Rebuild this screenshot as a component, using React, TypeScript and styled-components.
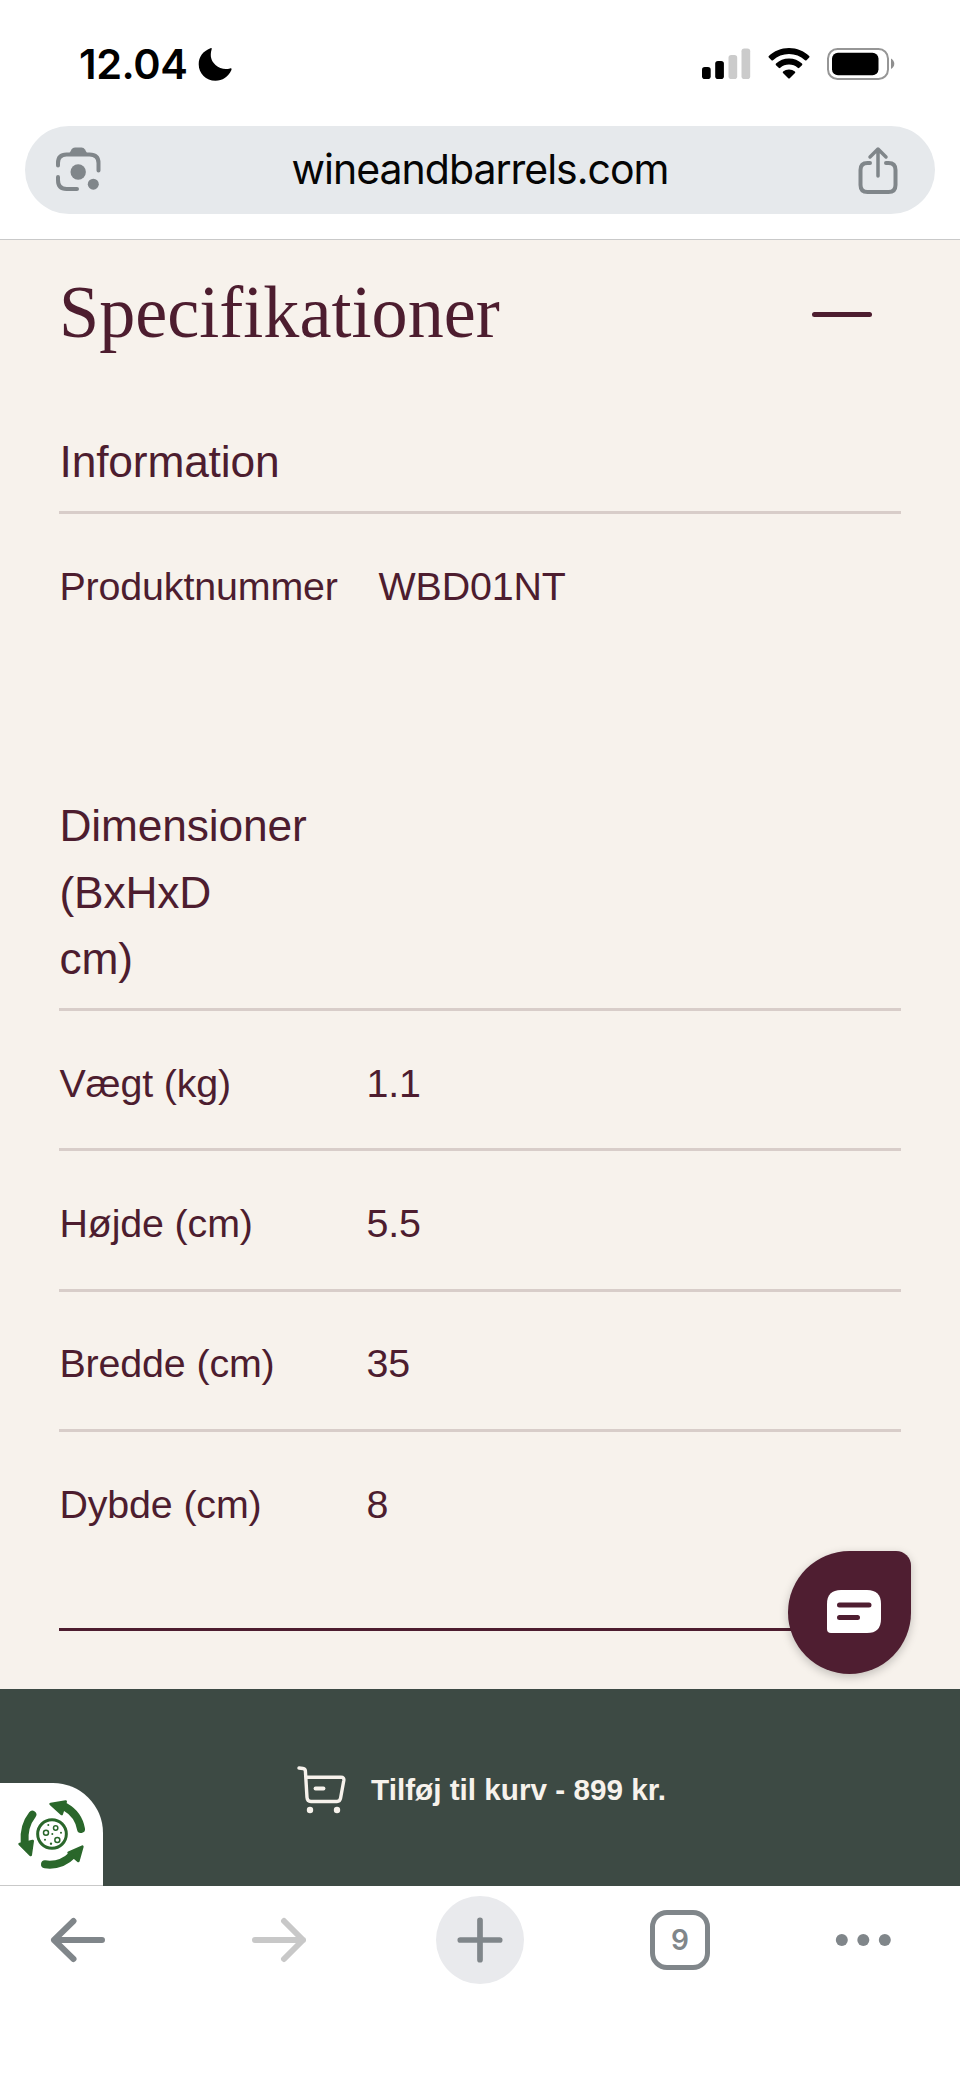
import React from "react";
import styled, { createGlobalStyle } from "styled-components";

const wine = "#4d1d2f";
const cream = "#f7f2ec";
const grey = "#80868a";

const GlobalStyle = createGlobalStyle`
  * { box-sizing: border-box; }
  body { margin: 0; background: #fff; }
`;

const Screen = styled.div`
  width: 960px;
  height: 2078px;
  display: flex;
  flex-direction: column;
  background: #fff;
  overflow: hidden;
  font-family: "Liberation Sans", Arial, sans-serif;
`;

const BrowserTop = styled.header`
  height: 240px;
  flex: none;
  display: flex;
  flex-direction: column;
  border-bottom: 1px solid #c9c9c9;
  font-family: Inter, "Liberation Sans", sans-serif;
`;

const StatusBar = styled.div`
  height: 126px;
  padding: 47px 65px 44px 79px;
  display: flex;
  align-items: flex-start;
  justify-content: space-between;
`;

const StatusGroup = styled.div<{ $gap: number }>`
  display: flex;
  align-items: center;
  gap: ${(p) => p.$gap}px;
  height: 34px;
`;

const Clock = styled.span`
  font-size: 41.5px;
  font-weight: 600;
  line-height: 34px;
  letter-spacing: -0.4px;
  width: 110px;
  white-space: nowrap;
  color: #000;
`;

const AddressBar = styled.div`
  height: 88px;
  margin: 0 25px;
  padding: 0 37px 0 29px;
  border-radius: 44px;
  background: #e6e9ec;
  display: flex;
  align-items: center;
  justify-content: space-between;
`;

const Address = styled.span`
  font-size: 41px;
  line-height: 48px;
  letter-spacing: -1px;
  color: #050505;
  padding-bottom: 3px;
`;

const Product = styled.main`
  height: 1449px;
  flex: none;
  padding: 24px 59px 0;
  background: ${cream};
  color: ${wine};
`;

const Accordion = styled.section`
  height: 1367px;
  border-bottom: 3px solid ${wine};
`;

const AccordionHeader = styled.div`
  height: 96px;
  display: flex;
  align-items: center;
  justify-content: space-between;
  padding-right: 29px;
`;

const Title = styled.h2`
  margin: 0;
  font-family: "Liberation Serif", "Times New Roman", serif;
  font-weight: 400;
  font-size: 75px;
  line-height: 96px;
  transform: scaleX(0.962);
  transform-origin: left;
`;

const Minus = styled.span`
  width: 60px;
  height: 5px;
  border-radius: 3px;
  background: ${wine};
  margin-top: 5px;
`;

const SpecGroup = styled.div<{ $top: number }>`
  margin-top: ${(p) => p.$top}px;
`;

const GroupHeading = styled.h3`
  margin: 0;
  padding: 0 640px 15.5px 0.5px;
  font-size: 44.3px;
  font-weight: 400;
  line-height: 66.5px;
  letter-spacing: -0.15px;
  border-bottom: 3px solid #d8cdc9;
`;

const SpecRow = styled.div<{ $label?: string; $last?: boolean }>`
  display: grid;
  grid-template-columns: ${(p) => p.$label ?? "307px"} 1fr;
  height: 140.4px;
  padding: 42.6px 0 0 0.5px;
  font-size: 39.4px;
  line-height: 59px;
  letter-spacing: -0.15px;
  white-space: nowrap;
  border-bottom: ${(p) => (p.$last ? "none" : "3px solid #d8cdc9")};
`;

const CartBar = styled.button`
  position: relative;
  height: 197px;
  flex: none;
  border: 0;
  padding: 4px 0 0 3px;
  background: #3d4a44;
  color: ${cream};
  display: flex;
  align-items: center;
  justify-content: center;
  gap: 24px;
  font: 700 29.7px/40px "Liberation Sans", Arial, sans-serif;
`;

const ConsentTab = styled.span`
  position: absolute;
  left: 0;
  bottom: 0;
  width: 103px;
  height: 103px;
  border-radius: 0 50px 0 0;
  background: #fff;
  border-bottom: 1px solid #c9c9c9;
  overflow: hidden;
`;

const ChatButton = styled.button`
  position: absolute;
  left: 788px;
  top: 1551px;
  width: 123px;
  height: 123px;
  border: 0;
  padding: 0 0 2px 8px;
  border-radius: 62px 15px 62px 62px;
  background: #4f1e31;
  box-shadow: 0 3px 10px rgba(0, 0, 0, 0.22);
  display: flex;
  align-items: center;
  justify-content: center;
`;

const Toolbar = styled.nav`
  height: 108px;
  flex: none;
  padding: 0 69px 0 50px;
  display: grid;
  grid-template-columns: 201px 179px 214px 191px auto;
  align-items: center;
`;

const NewTab = styled.span`
  width: 88px;
  height: 88px;
  margin-left: 6px;
  border-radius: 50%;
  background: #e9eaed;
  display: flex;
  align-items: center;
  justify-content: center;
`;

const TabCount = styled.span`
  width: 60px;
  height: 60px;
  margin-left: 6px;
  border: 5px solid ${grey};
  border-radius: 17px;
  display: flex;
  align-items: center;
  justify-content: center;
  font: 600 28px/34px Inter, sans-serif;
  color: ${grey};
`;

const MoonIcon = () => (
  <svg width="34" height="34" viewBox="0 0 34 34">
    <path d="M12.5 1.2C13.6.8 14 1.5 13.6 2.6C11.8 9 13 14 17.5 18C21.5 21.6 27 22.7 32 21.4C33.6 21 34 21.8 33.3 23.2C30 30 24.500 33.700 17.500 33.700C8 33.700.7 26.500.7 17.200C.7 9.800 5 4 12.500 1.200Z" />
  </svg>
);

const SignalIcon = () => (
  <svg width="49" height="32" viewBox="0 0 49 32">
    <rect x="0" y="19" width="8.700" height="12" rx="2.800" />
    <rect x="13.200" y="13" width="8.700" height="18" rx="2.800" />
    <rect x="26.500" y="7" width="8.700" height="24" rx="2.800" fill="#cbcbcb" />
    <rect x="39.500" y="0.500" width="8.700" height="30.500" rx="2.800" fill="#cbcbcb" />
  </svg>
);

const WifiIcon = () => (
  <svg width="42" height="32" viewBox="0 0 42 32">
    <path d="M21 0C29 0 36 3 41.200 8Q41.900 8.800 41.200 9.500L38.500 12.200Q37.800 12.900 37 12.200C32.500 8.200 27 6 21 6S9.500 8.200 5 12.200Q4.200 12.900 3.500 12.200L.8 9.500Q.1 8.800.8 8C6 3 13 0 21 0Z" />
    <path d="M21 10.600C26 10.600 30.600 12.500 34 15.600Q34.800 16.400 34 17.200L31.300 19.800Q30.500 20.500 29.700 19.800C27.300 17.800 24.300 16.600 21 16.600S14.700 17.800 12.300 19.800Q11.500 20.500 10.700 19.800L8 17.200Q7.200 16.400 8 15.600C11.400 12.500 16 10.600 21 10.600Z" />
    <path d="M21 21.500C23.300 21.500 25.200 22.200 26.900 23.500Q27.700 24.200 27 25L22 30Q21 31 20 30L15 25Q14.300 24.200 15.100 23.500C16.800 22.200 18.700 21.500 21 21.500Z" />
  </svg>
);

const BatteryIcon = () => (
  <svg width="68" height="32" viewBox="0 0 68 32">
    <rect x="1" y="1" width="60" height="30" rx="9.500" fill="none" stroke="#969696" strokeWidth="2" />
    <rect x="5" y="4.800" width="46.500" height="22.500" rx="6" />
    <path d="M64 10.500C66 11.500 67.300 13.500 67.300 15.800S66 20 64 21Z" fill="#8f8f8f" />
  </svg>
);

const LensIcon = () => (
  <svg width="48" height="48" viewBox="0 0 48 48" fill="none" stroke={grey} strokeWidth="4" strokeLinecap="round">
    <path d="M4 19.500V17Q4 8.500 12.500 8.500H35.500Q44.500 8.500 44.500 17V24.500" />
    <path d="M4 31V34Q4 43 12.500 43H23" />
    <path d="M14.500 9L17.500 3.500Q18.600 1.500 21 1.500H27.500Q29.900 1.500 31 3.500L34 9Z" fill={grey} stroke="none" />
    <circle cx="24.200" cy="26" r="7.700" fill={grey} stroke="none" />
    <circle cx="39.300" cy="38.200" r="5.500" fill={grey} stroke="none" />
  </svg>
);

const ShareIcon = () => (
  <svg width="40" height="48" viewBox="0 0 40 48" fill="none" stroke={grey} strokeWidth="4" strokeLinecap="round" strokeLinejoin="round">
    <path d="M12 17H9.500Q2.500 17 2.500 24V39Q2.500 46 9.500 46H30.500Q37.500 46 37.500 39V24Q37.500 17 30.500 17H28" />
    <path d="M20 30V3.500M12 11L20 3L28 11" strokeWidth="3.500" />
  </svg>
);

const ChatIcon = () => (
  <svg width="54" height="43" viewBox="0 0 54 43">
    <path d="M14 0H40Q54 0 54 14V29Q54 43 40 43H4Q0 43 0 39V14Q0 0 14 0Z" fill="#fff" />
    <path d="M12.500 15H42M12.500 27.500H30.500" stroke="#4f1e31" strokeWidth="5" strokeLinecap="round" />
  </svg>
);

const CartIcon = () => (
  <svg width="50" height="48" viewBox="0 0 50 48" fill="none" stroke={cream} strokeWidth="3.400" strokeLinecap="round" strokeLinejoin="round">
    <path d="M2 2L6 2.500Q8.200 2.800 8.400 5L10 31.500Q10.300 35.500 14 35.500H40Q43 35.500 43.600 32L46.800 14.500Q47.300 11.200 44 11.200H9" />
    <path d="M18.500 22.500H26.500" strokeWidth="3.800" />
    <circle cx="13" cy="44" r="3.200" fill={cream} stroke="none" />
    <circle cx="40" cy="44" r="3.200" fill={cream} stroke="none" />
  </svg>
);

const CookieIcon = () => (
  <svg width="104" height="103" viewBox="0 38 312 309" fill="none" stroke="#2a672b" strokeLinecap="round" strokeLinejoin="round">
    <circle cx="156" cy="191" r="43" strokeWidth="9" />
    <g strokeWidth="24">
      <path d="M97 133Q70 167 74 216" />
      <path d="M135 282Q184 288 217 254" />
      <path d="M243 176Q235 132 196 110" />
    </g>
    <g fill="#2a672b" strokeWidth="8">
      <path d="M59 221L98 212L92 254Z" />
      <path d="M206 247L247 229L235 272Z" />
      <path d="M152 101L197 94L185 131Z" />
    </g>
    <g strokeWidth="4.500">
      <circle cx="138" cy="187" r="7.500" />
      <circle cx="167" cy="173" r="6.500" />
      <circle cx="172" cy="209" r="7.500" />
    </g>
    <g fill="#2a672b" stroke="none">
      <circle cx="145" cy="164" r="3" />
      <circle cx="183" cy="187" r="3" />
      <circle cx="157" cy="191" r="3" />
      <circle cx="135" cy="208" r="3" />
      <circle cx="153" cy="220" r="3.500" />
    </g>
  </svg>
);

const ArrowIcon = ({ forward = false }: { forward?: boolean }) => (
  <svg width="55" height="46" viewBox="0 0 55 46" fill="none" stroke={forward ? "#c8c8c8" : grey} strokeWidth="6" strokeLinecap="round" strokeLinejoin="round">
    <path d={forward ? "M4 23H52M33 4L52 23L33 42" : "M52 23H4M23.500 4L4 23L23.500 42"} />
  </svg>
);

const PlusIcon = () => (
  <svg width="46" height="46" viewBox="0 0 46 46" stroke={grey} strokeWidth="5.700" strokeLinecap="round">
    <path d="M3.300 23H42.700M23 3.300V42.700" />
  </svg>
);

const DotsIcon = () => (
  <svg width="56" height="14" viewBox="0 0 56 14" fill={grey}>
    <circle cx="6.800" cy="7" r="6" />
    <circle cx="28.300" cy="7" r="6" />
    <circle cx="49.800" cy="7" r="6" />
  </svg>
);

const dimensions = [
  ["Vægt (kg)", "1.1"],
  ["Højde (cm)", "5.5"],
  ["Bredde (cm)", "35"],
  ["Dybde (cm)", "8"],
];

export default function App() {
  return (
    <Screen>
      <GlobalStyle />
      <BrowserTop>
        <StatusBar>
          <StatusGroup $gap={9}>
            <Clock>12.04</Clock>
            <MoonIcon />
          </StatusGroup>
          <StatusGroup $gap={17}>
            <SignalIcon />
            <WifiIcon />
            <BatteryIcon />
          </StatusGroup>
        </StatusBar>
        <AddressBar>
          <LensIcon />
          <Address>wineandbarrels.com</Address>
          <ShareIcon />
        </AddressBar>
      </BrowserTop>

      <Product>
        <Accordion>
          <AccordionHeader>
            <Title>Specifikationer</Title>
            <Minus />
          </AccordionHeader>
          <SpecGroup $top={69}>
            <GroupHeading>Information</GroupHeading>
            <SpecRow $label="319px" $last>
              <span>Produktnummer</span>
              <span>WBD01NT</span>
            </SpecRow>
          </SpecGroup>
          <SpecGroup $top={138.7}>
            <GroupHeading>Dimensioner (BxHxD cm)</GroupHeading>
            {dimensions.map(([label, value], i) => (
              <SpecRow key={label} $last={i === dimensions.length - 1}>
                <span>{label}</span>
                <span>{value}</span>
              </SpecRow>
            ))}
          </SpecGroup>
        </Accordion>
      </Product>

      <CartBar>
        <CartIcon />
        <span>Tilføj til kurv - 899 kr.</span>
        <ConsentTab>
          <CookieIcon />
        </ConsentTab>
      </CartBar>

      <Toolbar>
        <ArrowIcon />
        <ArrowIcon forward />
        <NewTab>
          <PlusIcon />
        </NewTab>
        <TabCount>9</TabCount>
        <DotsIcon />
      </Toolbar>

      <ChatButton>
        <ChatIcon />
      </ChatButton>
    </Screen>
  );
}
